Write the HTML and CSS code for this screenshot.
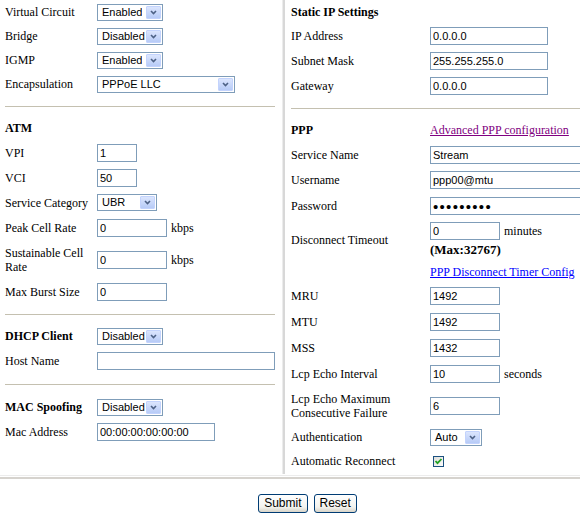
FILE: index.html
```html
<!DOCTYPE html>
<html>
<head>
<meta charset="utf-8">
<title>WAN Settings</title>
<link rel="stylesheet" href="styles.css">
</head>
<body>
<div class="page">
  <div class="cols">
    <div class="col left">
      <div class="row h24"><span class="lbl">Virtual Circuit</span><span class="sel w66"><span class="val">Enabled</span><span class="arr"><svg width="7" height="5" viewBox="0 0 7 5"><polyline points="1,1 3.5,3.5 6,1" fill="none" stroke="#4d6185" stroke-width="1.6"/></svg></span></span></div>
      <div class="row h24"><span class="lbl">Bridge</span><span class="sel w66"><span class="val">Disabled</span><span class="arr"><svg width="7" height="5" viewBox="0 0 7 5"><polyline points="1,1 3.5,3.5 6,1" fill="none" stroke="#4d6185" stroke-width="1.6"/></svg></span></span></div>
      <div class="row h24"><span class="lbl">IGMP</span><span class="sel w66"><span class="val">Enabled</span><span class="arr"><svg width="7" height="5" viewBox="0 0 7 5"><polyline points="1,1 3.5,3.5 6,1" fill="none" stroke="#4d6185" stroke-width="1.6"/></svg></span></span></div>
      <div class="row h24"><span class="lbl">Encapsulation</span><span class="sel w138"><span class="val">PPPoE LLC</span><span class="arr"><svg width="7" height="5" viewBox="0 0 7 5"><polyline points="1,1 3.5,3.5 6,1" fill="none" stroke="#4d6185" stroke-width="1.6"/></svg></span></span></div>
      <div class="sep sep-a"></div>
      <div class="row h24"><span class="lbl b">ATM</span></div>
      <div class="row h25"><span class="lbl">VPI</span><input class="in w40" type="text" value="1"></div>
      <div class="row h25"><span class="lbl">VCI</span><input class="in w40" type="text" value="50"></div>
      <div class="row h25"><span class="lbl">Service Category</span><span class="sel w60"><span class="val">UBR</span><span class="arr"><svg width="7" height="5" viewBox="0 0 7 5"><polyline points="1,1 3.5,3.5 6,1" fill="none" stroke="#4d6185" stroke-width="1.6"/></svg></span></span></div>
      <div class="row h25"><span class="lbl">Peak Cell Rate</span><span class="val-cell"><input class="in w70" type="text" value="0"> <span class="unit">kbps</span></span></div>
      <div class="row h39"><span class="lbl">Sustainable Cell Rate</span><span class="val-cell"><input class="in w70" type="text" value="0"> <span class="unit">kbps</span></span></div>
      <div class="row h25"><span class="lbl">Max Burst Size</span><input class="in w70" type="text" value="0"></div>
      <div class="sep sep-b"></div>
      <div class="row h24"><span class="lbl b">DHCP Client</span><span class="sel w66"><span class="val">Disabled</span><span class="arr"><svg width="7" height="5" viewBox="0 0 7 5"><polyline points="1,1 3.5,3.5 6,1" fill="none" stroke="#4d6185" stroke-width="1.6"/></svg></span></span></div>
      <div class="row h25"><span class="lbl">Host Name</span><input class="in w178" type="text" value=""></div>
      <div class="sep sep-c"></div>
      <div class="row h24"><span class="lbl b">MAC Spoofing</span><span class="sel w66"><span class="val">Disabled</span><span class="arr"><svg width="7" height="5" viewBox="0 0 7 5"><polyline points="1,1 3.5,3.5 6,1" fill="none" stroke="#4d6185" stroke-width="1.6"/></svg></span></span></div>
      <div class="row h25"><span class="lbl">Mac Address</span><input class="in w118" type="text" value="00:00:00:00:00:00"></div>
    </div>
    <div class="vdiv"></div>
    <div class="col right">
      <div class="row h23"><span class="lbl b">Static IP Settings</span></div>
      <div class="row h25"><span class="lbl">IP Address</span><input class="in w118" type="text" value="0.0.0.0"></div>
      <div class="row h25"><span class="lbl">Subnet Mask</span><input class="in w118" type="text" value="255.255.255.0"></div>
      <div class="row h26"><span class="lbl">Gateway</span><input class="in w118" type="text" value="0.0.0.0"></div>
      <div class="sep sep-r"></div>
      <div class="row h24"><span class="lbl b">PPP</span><a class="link visited" href="#adv">Advanced PPP configuration</a></div>
      <div class="row h25"><span class="lbl">Service Name</span><input class="in wide" type="text" value="Stream"></div>
      <div class="row h26"><span class="lbl">Username</span><input class="in wide" type="text" value="ppp00@mtu"></div>
      <div class="row h26"><span class="lbl">Password</span><input class="in wide pw" type="password" value="123456789"></div>
      <div class="row h42"><span class="lbl">Disconnect Timeout</span><span class="val-cell top"><span class="line"><input class="in w70" type="text" value="0"> <span class="unit">minutes</span></span><span class="max">(Max:32767)</span></span></div>
      <div class="row h22"><span class="lbl"></span><a class="link" href="#timer">PPP Disconnect Timer Config</a></div>
      <div class="row h26"><span class="lbl">MRU</span><input class="in w70" type="text" value="1492"></div>
      <div class="row h26"><span class="lbl">MTU</span><input class="in w70" type="text" value="1492"></div>
      <div class="row h26"><span class="lbl">MSS</span><input class="in w70" type="text" value="1432"></div>
      <div class="row h26"><span class="lbl">Lcp Echo Interval</span><span class="val-cell"><input class="in w70" type="text" value="10"> <span class="unit">seconds</span></span></div>
      <div class="row h38"><span class="lbl">Lcp Echo Maximum Consecutive Failure</span><input class="in w70" type="text" value="6"></div>
      <div class="row h24"><span class="lbl">Authentication</span><span class="sel w52"><span class="val">Auto</span><span class="arr"><svg width="7" height="5" viewBox="0 0 7 5"><polyline points="1,1 3.5,3.5 6,1" fill="none" stroke="#4d6185" stroke-width="1.6"/></svg></span></span></div>
      <div class="row h24"><span class="lbl">Automatic Reconnect</span><span class="chk"><svg width="11" height="11" viewBox="0 0 11 11"><defs><linearGradient id="cg" x1="0" y1="0" x2="1" y2="1"><stop offset="0" stop-color="#dcdcd7"/><stop offset="1" stop-color="#ffffff"/></linearGradient></defs><rect x="0.5" y="0.5" width="10" height="10" fill="url(#cg)" stroke="#1c5180"/><polyline points="2.5,5 4.5,7.2 8.5,3" fill="none" stroke="#21a121" stroke-width="1.8"/></svg></span></div>
    </div>
  </div>
  <div class="hr"></div>
  <div class="buttons">
    <button class="btn" type="button">Submit</button>
    <button class="btn" type="button">Reset</button>
  </div>
</div>
</body>
</html>
```
FILE: styles.css
```css
html { overflow: hidden; }
body {
  margin: 0;
  background: #ffffff;
  color: #000000;
  font-family: "Liberation Serif", "Times New Roman", serif;
  font-size: 12px;
}
.page { width: 580px; overflow: hidden; }
.cols { display: flex; height: 474px; }
.col { display: flex; flex-direction: column; box-sizing: border-box; padding-left: 5px; }
.left { width: 282px; flex: none; }
.right { flex: 1; min-width: 0; overflow: hidden; padding-left: 6px; }
.vdiv {
  width: 2px;
  flex: none;
  background: #d8d8d8;
  border-left: 1px solid #ececec;
}
.row { display: flex; align-items: center; flex: none; }
.h22 { height: 22px; }
.h23 { height: 23px; }
.h24 { height: 24px; }
.h25 { height: 25px; }
.h26 { height: 26px; }
.h38 { height: 38px; }
.h39 { height: 39px; }
.h42 { height: 42px; }
.lbl { flex: none; line-height: 14px; }
.left .lbl { width: 92px; }
.right .lbl { width: 139px; }
.b { font-weight: bold; }
.sep { height: 1px; background: #c4c0b0; flex: none; }
.left .sep { width: 270px; }
.sep-a { margin: 10px 0 9px; }
.sep-b { margin: 10px 0 9px; }
.sep-c { margin: 11px 0 10px; }
.sep-r { margin: 9px 0 9px; }
.in {
  box-sizing: border-box;
  height: 18px;
  border: 1px solid #7f9db9;
  padding: 0 2px;
  margin: 0;
  font-family: "Liberation Sans", Arial, sans-serif;
  font-size: 11px;
  color: #000;
  background: #fff;
  outline: none;
}
.pw { font-size: 15px; letter-spacing: 1.3px; }
.w40 { width: 40px; }
.w52 { width: 52px; }
.w60 { width: 60px; }
.w66 { width: 66px; }
.w70 { width: 70px; }
.w118 { width: 118px; }
.w138 { width: 138px; }
.w178 { width: 178px; }
.wide { width: 160px; flex: none; }
.sel {
  box-sizing: border-box;
  height: 17px;
  border: 1px solid #7f9db9;
  padding: 1px;
  display: inline-flex;
  align-items: stretch;
  justify-content: space-between;
  background: #fff;
  font-family: "Liberation Sans", Arial, sans-serif;
  font-size: 11px;
}
.sel .val { padding-left: 3px; line-height: 13px; white-space: nowrap; overflow: hidden; }
.arr {
  width: 15px;
  flex: none;
  box-sizing: border-box;
  border: 1px solid #c3d3fd;
  border-radius: 1px;
  background: linear-gradient(#dbe5fd, #b7cbf7);
  display: flex;
  align-items: center;
  justify-content: center;
}
.arr svg { display: block; }
.val-cell { display: block; }
.unit { margin-left: 1px; }
.top { align-self: flex-start; padding-top: 3px; display: flex; flex-direction: column; }
.line { display: block; height: 18px; }
.max { font-weight: bold; font-size: 13px; line-height: 16px; margin-top: 2px; }
.link { color: #0000ff; text-decoration: underline; }
.visited { color: #800080; }
.chk { display: inline-flex; margin-left: 3px; }
.chk svg { display: block; }
.hr {
  margin-top: 1px;
  height: 2px;
  border-top: 1px solid #ececec;
  background: #d6d3ce;
  background-clip: content-box;
  padding-top: 1px;
}
.buttons { display: flex; justify-content: center; gap: 6px; margin-top: 15px; padding-left: 35px; }
.btn {
  box-sizing: border-box;
  height: 19px;
  padding: 0 5px;
  border: 1px solid #003c74;
  border-radius: 3px;
  background: linear-gradient(#ffffff, #f3f3ef 70%, #d8d4c8);
  font-family: "Liberation Sans", Arial, sans-serif;
  font-size: 12px;
  color: #000;
  line-height: 15px;
}
```
